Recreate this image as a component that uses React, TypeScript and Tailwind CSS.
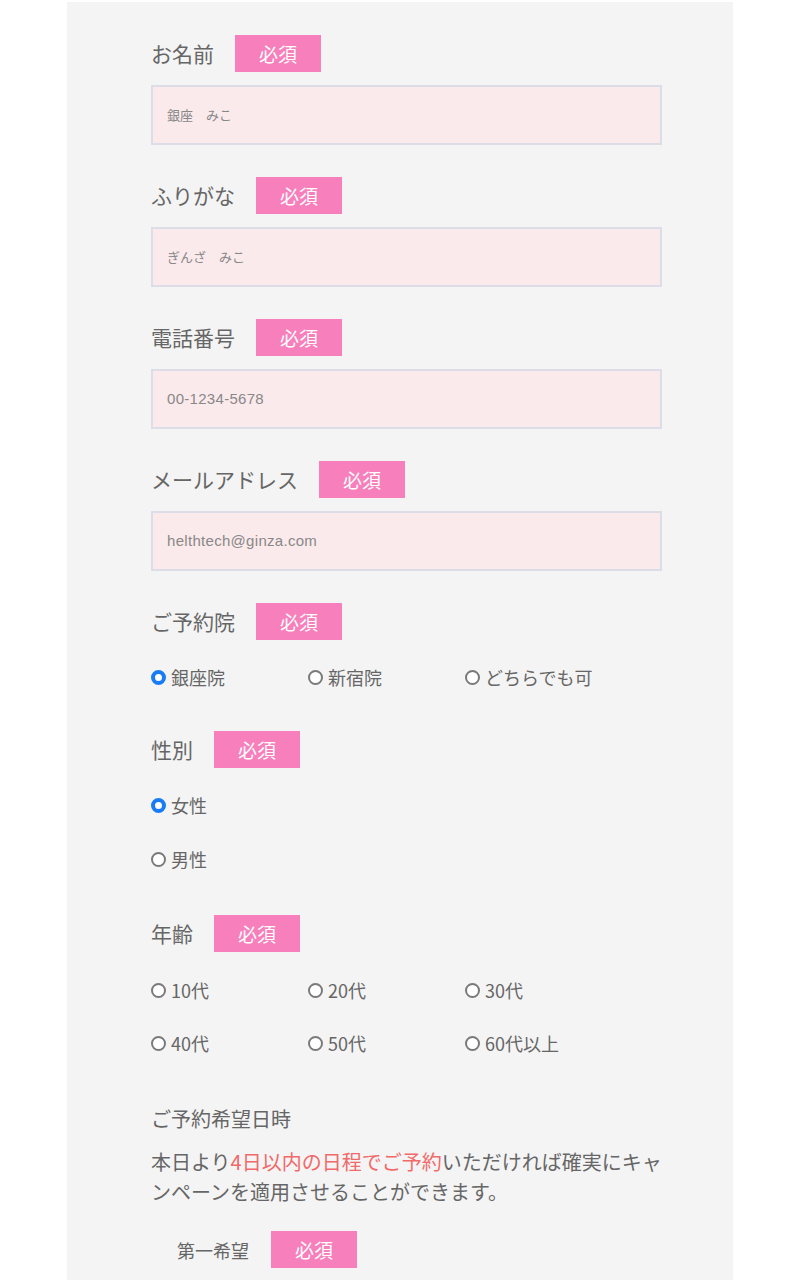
import React from "react";

const font = { fontFamily: '"Noto Sans CJK JP", "Noto Sans", sans-serif' };

function Badge() {
  return (
    <span className="inline-flex h-[37px] w-[86px] items-center justify-center bg-[#f77fbb] text-[19px] leading-none text-white">
      必須
    </span>
  );
}

function Label({ text }: { text: string }) {
  return (
    <div className="flex h-[37px] items-center gap-[21px]">
      <span className="text-[21px] leading-none text-[#666]">{text}</span>
      <Badge />
    </div>
  );
}

function TextField({ label, value, latin }: { label: string; value: string; latin?: boolean }) {
  return (
    <div className="mb-[32px]">
      <Label text={label} />
      <div className="mt-[13px] flex h-[60px] items-center border-2 border-[#dcdde6] bg-[#fbeaec] pl-[14px]">
        {latin ? (
          <span
            className="text-[15px] tracking-[0.3px] text-[#888]"
            style={{ fontFamily: '"Liberation Sans", "Noto Sans CJK JP", sans-serif' }}
          >
            {value}
          </span>
        ) : (
          <span className="text-[13px] text-[#888]">{value}</span>
        )}
      </div>
    </div>
  );
}

function Radio({ label, checked }: { label: string; checked?: boolean }) {
  return (
    <div className="flex h-[24px] items-center gap-[5px]">
      {checked ? (
        <span className="box-border h-[15px] w-[15px] rounded-full border-[4px] border-[#1a7cf5] bg-white" />
      ) : (
        <span className="box-border h-[15px] w-[15px] rounded-full border-2 border-[#7a7a7a] bg-white" />
      )}
      <span className="text-[18px] leading-none text-[#666]">{label}</span>
    </div>
  );
}

export default function App() {
  return (
    <div className="min-h-[1280px] bg-white pt-[2px]" style={font}>
      <div className="mx-auto min-h-[1278px] w-[666px] bg-[#f4f4f4] pl-[84px] pr-[71px] pt-[33px]">
        <TextField label="お名前" value="銀座　みこ" />
        <TextField label="ふりがな" value="ぎんざ　みこ" />
        <TextField label="電話番号" value="00-1234-5678" latin />
        <TextField label="メールアドレス" value="helthtech@ginza.com" latin />

        <div className="mb-[42px]">
          <Label text="ご予約院" />
          <div className="mt-[25px] grid grid-cols-[157px_157px_1fr]">
            <Radio label="銀座院" checked />
            <Radio label="新宿院" />
            <Radio label="どちらでも可" />
          </div>
        </div>

        <div className="mb-[44px]">
          <Label text="性別" />
          <div className="mt-[25px] flex flex-col gap-[30px]">
            <Radio label="女性" checked />
            <Radio label="男性" />
          </div>
        </div>

        <div className="mb-[49px]">
          <Label text="年齢" />
          <div className="mt-[26px] grid grid-cols-[157px_157px_1fr] gap-y-[29px]">
            <Radio label="10代" />
            <Radio label="20代" />
            <Radio label="30代" />
            <Radio label="40代" />
            <Radio label="50代" />
            <Radio label="60代以上" />
          </div>
        </div>

        <div className="text-[20px] leading-[30px] text-[#666]">ご予約希望日時</div>
        <p className="mt-[13px] text-[20px] leading-[30px] text-[#666]">
          本日より<span className="text-[#f06a6a]">4日以内の日程でご予約</span>いただければ確実にキャ
          <br />
          ンペーンを適用させることができます。
        </p>

        <div className="mt-[24px] flex h-[37px] items-center gap-[22px] pl-[26px]">
          <span className="text-[18px] leading-none text-[#666]">第一希望</span>
          <Badge />
        </div>
      </div>
    </div>
  );
}
